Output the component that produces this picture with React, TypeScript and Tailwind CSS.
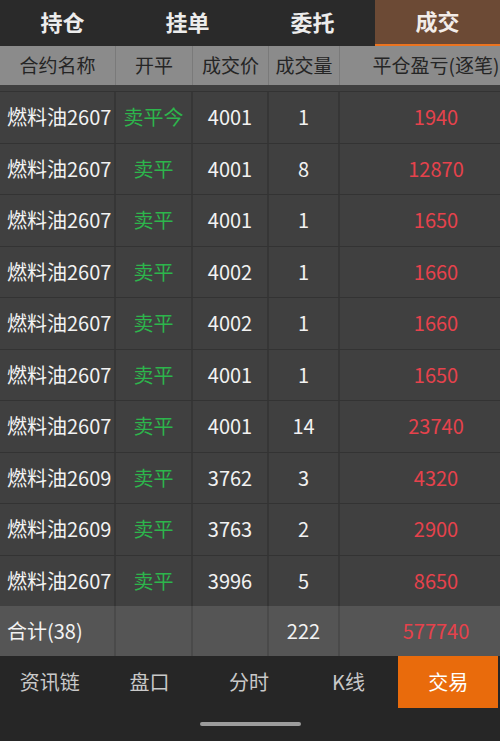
const tabs = ["持仓", "挂单", "委托", "成交"];

const rows = [
  { name: "燃料油2607", type: "卖平今", price: "4001", qty: "1", pnl: "1940" },
  { name: "燃料油2607", type: "卖平", price: "4001", qty: "8", pnl: "12870" },
  { name: "燃料油2607", type: "卖平", price: "4001", qty: "1", pnl: "1650" },
  { name: "燃料油2607", type: "卖平", price: "4002", qty: "1", pnl: "1660" },
  { name: "燃料油2607", type: "卖平", price: "4002", qty: "1", pnl: "1660" },
  { name: "燃料油2607", type: "卖平", price: "4001", qty: "1", pnl: "1650" },
  { name: "燃料油2607", type: "卖平", price: "4001", qty: "14", pnl: "23740" },
  { name: "燃料油2609", type: "卖平", price: "3762", qty: "3", pnl: "4320" },
  { name: "燃料油2609", type: "卖平", price: "3763", qty: "2", pnl: "2900" },
  { name: "燃料油2607", type: "卖平", price: "3996", qty: "5", pnl: "8650" },
];

const navItems = ["资讯链", "盘口", "分时", "K线", "交易"];

const font = { fontFamily: '"Noto Sans CJK SC", "Noto Sans", sans-serif' };

export default function App() {
  return (
    <div className="w-[500px] h-[741px] bg-[#262626] flex flex-col overflow-hidden" style={font}>
      {/* top tabs */}
      <div className="flex h-[46px] shrink-0 bg-[#2a2a2a]">
        {tabs.map((t, i) => (
          <div
            key={t}
            className={
              i === 3
                ? "flex-1 flex items-center justify-center bg-[#6c4a35] border-b-[2px] border-[#ec7420] text-[22px] font-bold text-[#f2ece8]"
                : "flex-1 flex items-center justify-center text-[22px] font-bold text-[#ececec]"
            }
          >
            <span className="-mt-[4px]">{t}</span>
          </div>
        ))}
      </div>

      {/* header */}
      <div className="flex h-[39px] shrink-0 bg-[#8b8b8b] text-[19px] text-[#252525]">
        <div className="w-[116px] flex items-center justify-center border-r border-[#7a7a7a]">合约名称</div>
        <div className="w-[77px] flex items-center justify-center border-r border-[#7a7a7a]">开平</div>
        <div className="w-[76px] flex items-center justify-center border-r border-[#7a7a7a]">成交价</div>
        <div className="w-[71px] flex items-center justify-center border-r border-[#7a7a7a]">成交量</div>
        <div className="flex-1 flex items-center justify-center pl-[32px] whitespace-nowrap">平仓盈亏(逐笔)</div>
      </div>

      {/* rows */}
      <div className="bg-[#404040] pt-[6px] shrink-0">
        {rows.map((r, i) => (
          <div key={i} className="flex h-[51.5px] border-t border-[#333333] text-[20px] text-[#f2f2f2]">
            <div className="w-[116px] flex items-center pl-[7px] border-r-2 border-[#363636] whitespace-nowrap">{r.name}</div>
            <div className="w-[77px] flex items-center justify-center border-r-2 border-[#363636] text-[#2db54c]">{r.type}</div>
            <div className="w-[76px] flex items-center justify-center border-r-2 border-[#363636]">{r.price}</div>
            <div className="w-[71px] flex items-center justify-center border-r-2 border-[#363636]">{r.qty}</div>
            <div className="flex-1 flex items-center justify-center pl-[32px] text-[#e6424c]">{r.pnl}</div>
          </div>
        ))}
      </div>

      {/* total row */}
      <div className="flex h-[50px] shrink-0 bg-[#555555] text-[20px] text-[#f2f2f2]">
        <div className="w-[116px] flex items-center pl-[7px] border-r-2 border-[#4a4a4a]">合计(38)</div>
        <div className="w-[77px] border-r-2 border-[#4a4a4a]" />
        <div className="w-[76px] border-r-2 border-[#4a4a4a]" />
        <div className="w-[71px] flex items-center justify-center border-r-2 border-[#4a4a4a]">222</div>
        <div className="flex-1 flex items-center justify-center pl-[32px] text-[#e6424c]">577740</div>
      </div>

      {/* bottom nav */}
      <div className="flex h-[52px] shrink-0 text-[20px]">
        {navItems.map((n, i) => (
          <div
            key={n}
            className={
              i === 4
                ? "flex-1 mr-[2px] flex items-center justify-center bg-[#e96b0c] text-white"
                : "flex-1 flex items-center justify-center text-[#c9c9c9]"
            }
          >
            {n}
          </div>
        ))}
      </div>

      <div className="flex-1 flex justify-center pt-[14px]">
        <div className="w-[101px] h-[4px] rounded-full bg-[#9c9c9c]" />
      </div>
    </div>
  );
}
